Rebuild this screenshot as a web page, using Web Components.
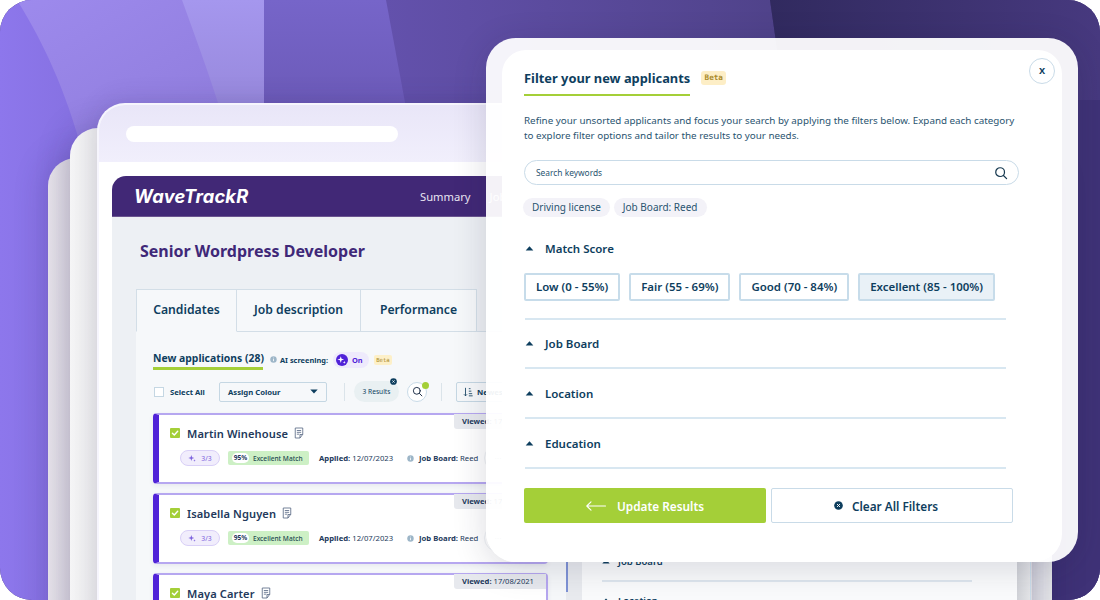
<!DOCTYPE html>
<html lang="en">
<head>
<meta charset="utf-8">
<title>WaveTrackR filters</title>
<style>
  html, body { margin: 0; background: #fff; }
  body { font-family: "Noto Sans", sans-serif; color: #0e3e5e; }
</style>
</head>
<body>
<hero-scene>
  <back-window slot="windows" class="w3"></back-window>
  <back-window slot="windows" class="w2"></back-window>
  <app-window slot="windows">
    <candidate-list slot="left">
      <candidate-card name="Martin Winehouse" viewed="17/08/2021"></candidate-card>
      <candidate-card name="Isabella Nguyen" viewed="17/08/2021"></candidate-card>
      <candidate-card name="Maya Carter" viewed="17/08/2021"></candidate-card>
    </candidate-list>
  </app-window>
  <filter-modal slot="modal">
    <filter-section first label="Match Score">
      <score-option>Low (0 - 55%)</score-option>
      <score-option>Fair (55 - 69%)</score-option>
      <score-option>Good (70 - 84%)</score-option>
      <score-option selected>Excellent (85 - 100%)</score-option>
    </filter-section>
    <filter-section tight label="Job Board"></filter-section>
    <filter-section label="Location"></filter-section>
    <filter-section label="Education"></filter-section>
  </filter-modal>
</hero-scene>

<script>
const ICONS = {
  search: `<svg viewBox="0 0 16 16" fill="none" stroke="currentColor" stroke-width="1.4" stroke-linecap="round"><circle cx="7" cy="7" r="5"/><path d="M10.8 10.8 14.4 14.4"/></svg>`,
  caret: `<svg viewBox="0 0 10 6"><path d="M5 .4 9.6 5.4H.4Z" fill="currentColor"/></svg>`,
  spark: `<svg viewBox="0 0 12 12" fill="currentColor"><path d="M5 1.5 6.1 4.9 9.5 6 6.1 7.1 5 10.5 3.9 7.1.5 6 3.9 4.9Z"/><path d="M9.7 7.8 10.2 9.3 11.7 9.8 10.2 10.3 9.7 11.8 9.2 10.3 7.7 9.8 9.2 9.3Z"/></svg>`,
  check: `<svg viewBox="0 0 10 10" fill="none" stroke="#fff" stroke-width="1.4" stroke-linecap="round" stroke-linejoin="round"><path d="M2.4 5.2 4.3 7 7.7 3.2"/></svg>`,
  note: `<svg viewBox="0 0 12 14" fill="none" stroke="currentColor" stroke-width="1"><path d="M1.5 1h9v7.6L7.2 13H1.5Z"/><path d="M3.4 4h5.2M3.4 6.2h5.2M3.4 8.4h3M7.2 13V8.8h3.3"/></svg>`,
  info: `<svg viewBox="0 0 10 10"><circle cx="5" cy="5" r="4.6" fill="#9db6c8"/><path d="M5 4.4v3M5 2.4v1" stroke="#fff" stroke-width="1.2"/></svg>`,
  sort: `<svg viewBox="0 0 12 12" fill="none" stroke="currentColor" stroke-width="1"><path d="M3 1v9.5M1.2 8.8 3 10.6 4.8 8.8M7 2h2M7 5h3M7 8h4M7 10.6h4.6"/></svg>`,
  arrow: `<svg viewBox="0 0 20 10" fill="none" stroke="currentColor" stroke-width="1.1" stroke-linecap="round" stroke-linejoin="round"><path d="M19.5 5H.8M5 .8.8 5 5 9.2"/></svg>`,
  clear: `<svg viewBox="0 0 10 10"><circle cx="5" cy="5" r="4.8" fill="currentColor"/><path d="M3.4 3.4 6.6 6.6M6.6 3.4 3.4 6.6" stroke="#fff" stroke-width="1.1"/></svg>`
};

class HeroScene extends HTMLElement {
  constructor() {
    super();
    this.attachShadow({ mode: "open" }).innerHTML = `
      <style>
        :host { display: block; position: relative; width: 1100px; height: 600px; overflow: hidden; border-radius: 32px; background: #3f3277; }
        svg { position: absolute; inset: 0; width: 100%; height: 100%; }
      </style>
      <svg viewBox="0 0 1100 600" preserveAspectRatio="none">
        <defs>
          <linearGradient id="base" x1="0" x2="1"><stop offset="0" stop-color="#8d77ec"/><stop offset="1" stop-color="#7563c8"/></linearGradient>
          <linearGradient id="b1" x1="0" x2="1" y1="0" y2="1"><stop offset="0" stop-color="#9d8aed"/><stop offset="1" stop-color="#8d7ad9"/></linearGradient>
          <linearGradient id="b2" x1="0" x2="0" y1="0" y2="1"><stop offset="0" stop-color="#a597ee"/><stop offset="1" stop-color="#9485d8"/></linearGradient>
          <linearGradient id="b3" x1="0" x2="0" y1="0" y2="1"><stop offset="0" stop-color="#7665c9"/><stop offset="1" stop-color="#6957b3"/></linearGradient>
          <linearGradient id="b4" x1="0" x2="1"><stop offset="0" stop-color="#6351ac"/><stop offset="1" stop-color="#4f4289"/></linearGradient>
          <linearGradient id="b5" x1="0" x2="1"><stop offset="0" stop-color="#312a5f"/><stop offset="1" stop-color="#47397f"/></linearGradient>
        </defs>
        <rect width="264" height="600" fill="url(#base)"/>
        <path d="M17 0C45 45 65 90 82 150H240L264 0Z" fill="url(#b1)"/>
        <path d="M182 0C200 50 215 90 226 130H264V0Z" fill="url(#b2)"/>
        <rect x="264" width="150" height="140" fill="url(#b3)"/>
        <path d="M386 0 412 140H790L770 0Z" fill="url(#b4)"/>
        <path d="M770 0 790 140 1052 600H1100V0Z" fill="url(#b5)"/>
        <rect x="790" y="100" width="310" height="500" fill="#3f3277"/>
      </svg>
      <slot name="windows"></slot>
      <slot name="modal"></slot>`;
  }
}

class BackWindow extends HTMLElement {
  constructor() {
    super();
    const front = this.classList.contains("w2");
    this.attachShadow({ mode: "open" }).innerHTML = `
      <style>
        :host {
          display: block; position: absolute; bottom: -40px;
          left: ${front ? 70 : 48}px; width: ${front ? 962 : 1004}px; top: ${front ? 128 : 158}px;
          border-radius: 28px 28px 0 0;
          background: ${front
            ? "linear-gradient(90deg,#f5f5f6,#e8e8ea 27px,#e8e8ea)"
            : "linear-gradient(90deg,#e8e5ec,#d7d3dd 22px,#e6e7ea 22px)"};
          box-shadow: 0 0 34px rgba(40,30,90,.22);
        }
      </style>`;
  }
}

class AppWindow extends HTMLElement {
  constructor() {
    super();
    this.attachShadow({ mode: "open" }).innerHTML = `
      <style>
        :host {
          display: flex; flex-direction: column; position: absolute; left: 97px; top: 103px; width: 934px; bottom: -40px;
          border-radius: 28px 28px 0 0; overflow: hidden; box-sizing: border-box;
          border: solid #f6f5fd; border-width: 2px 0 0 2px;
          background: #fff; box-shadow: 0 -4px 24px rgba(40,30,90,.12);
        }
        .chrome { height: 57px; flex: none; box-sizing: border-box; padding: 21px 0 0 27px; background: linear-gradient(#e9e6f8, #f1effc); }
        .chrome i { display: block; width: 272px; height: 16px; border-radius: 8px; background: #fff; }
        .body { flex: 1; min-height: 0; display: flex; padding: 14px 0 0 13px; background: linear-gradient(90deg,#fff calc(100% - 15px),#cfd1d6 calc(100% - 15px),#e3e4e7 calc(100% - 1px),#c9dbe8 calc(100% - 1px)); }
        .app { width: 905px; display: flex; flex-direction: column; }
        header { height: 41px; flex: none; box-sizing: border-box; display: flex; align-items: center; padding-left: 22px; background: #412876; border-bottom: 1px solid #6a548f; border-radius: 14px 0 0 0; color: #fff; }
        .logo { font: italic 700 18.3px/1 Inter, "Liberation Sans", sans-serif; letter-spacing: .2px; width: 286px; white-space: nowrap; }
        nav { display: flex; gap: 19px; font-size: 11.2px; color: #e9e5f2; }
        main { flex: 1; background: #edf0f4; min-height: 0; }
        h1 { margin: 0; padding: 23px 0 0 28px; font-size: 16px; line-height: 22px; font-weight: 700; color: #3f2878; }
        .tabs { display: flex; margin: 27px 0 0 24px; height: 43px; box-sizing: border-box; border-bottom: 1px solid #d3dee7; }
        .tabs span { box-sizing: border-box; height: 43px; padding-bottom: 2px; display: flex; align-items: center; justify-content: center; font-size: 12.2px; font-weight: 600; background: #f6f8fa; border: solid #d3dee7; border-width: 1px 1px 1px 0; }
        .tabs span:first-child { width: 101px; border-left-width: 1px; border-bottom-color: #f6f8fa; }
        .tabs span:nth-child(2) { width: 124px; }
        .tabs span:nth-child(3) { width: 116px; }
        .cols { display: flex; margin-left: 24px; height: 300px; }
        .left { width: 430px; flex: none; box-sizing: border-box; padding: 8px 18px 0 17px; background: #f6f8fa; position: relative; }
        .scroll { width: 16px; flex: none; background: #e9ebef; position: relative; }
        .scroll::before { content: ""; display: block; width: 2px; height: 260px; background: #7f93d6; }
        .right { flex: 1; background: #fafbfc; padding: 219px 45px 0 20px; }
        .right div { display: flex; align-items: center; gap: 8px; font-size: 9.5px; font-weight: 600; height: 20px; padding-bottom: 9px; margin-bottom: 8px; border-bottom: 2px solid #dde6ee; }
        .right div svg { width: 8px; height: 5px; }
      </style>
      <div class="chrome"><i></i></div>
      <div class="body">
        <div class="app">
          <header><span class="logo">WaveTrackR</span>
            <nav><span>Summary</span><span>Job</span></nav></header>
          <main>
            <h1>Senior Wordpress Developer</h1>
            <div class="tabs"><span>Candidates</span><span>Job description</span><span>Performance</span></div>
            <div class="cols">
              <div class="left"><slot name="left"></slot></div>
              <div class="scroll"></div>
              <div class="right">
                <div>${ICONS.caret}Job Board</div>
                <div>${ICONS.caret}Location</div>
              </div>
            </div>
          </main>
        </div>
      </div>`;
  }
}

class CandidateList extends HTMLElement {
  static #template = document.createElement("template");
  static {
    this.#template.innerHTML = `
      <style>
        :host { display: block; font-family: "Noto Sans", sans-serif; }
        .heading { display: flex; align-items: center; height: 39px; }
        .tab { height: 21px; width: 110px; box-sizing: border-box; line-height: 18px; margin-top: -1px; font-size: 10.4px; font-weight: 700; white-space: nowrap; border-bottom: 3px solid #a4cf38; }
        .info { width: 7px; height: 7px; margin-left: 7px; display: flex; }
        .ai { margin-left: 3px; font-size: 7.4px; font-weight: 700; white-space: nowrap; }
        .toggle { display: flex; align-items: center; gap: 4px; box-sizing: border-box; width: 36px; height: 16px; margin-left: 5px; padding-left: 3px; border-radius: 8px; background: #eeeafc; color: #5022d8; font-size: 7.4px; font-weight: 700; }
        .toggle b { width: 12px; height: 12px; border-radius: 50%; background: #5022d8; color: #fff; display: flex; align-items: center; justify-content: center; }
        .toggle svg { width: 9px; height: 9px; }
        .beta { margin-left: 5px; width: 18px; height: 10px; border-radius: 2px; background: #fdf0c8; color: #a98a2a; font: 5.6px/10px "DejaVu Sans Mono", monospace; text-align: center; }
        .tools { display: flex; align-items: center; height: 21px; margin: 2px 0 11px; font-size: 7.7px; font-weight: 700; }
        .box { width: 10px; height: 10px; box-sizing: border-box; margin-left: 1px; border: 1px solid #c5d7e3; background: #fff; }
        .all { margin-left: 6px; width: 49px; white-space: nowrap; }
        .select { width: 108px; height: 20px; box-sizing: border-box; display: flex; align-items: center; justify-content: space-between; padding: 0 8px; border: 1px solid #c5d7e3; border-radius: 2px; white-space: nowrap; }
        .select svg { width: 8px; height: 5px; transform: scaleY(-1); }
        .sep { width: 1px; height: 18px; background: #dbe4ea; }
        .results { position: relative; width: 45px; height: 21px; border-radius: 11px; background: #e9f0f2; display: flex; align-items: center; justify-content: center; font-size: 6.6px; font-weight: 400; white-space: nowrap; }
        .results svg { position: absolute; right: 2px; top: -3px; width: 7px; height: 7px; }
        .circle { position: relative; width: 20px; height: 20px; box-sizing: border-box; margin-left: 8px; border: 1px solid #c9dbe8; border-radius: 50%; background: #fff; display: flex; align-items: center; justify-content: center; color: #1b2c45; }
        .circle svg { width: 11px; height: 11px; }
        .circle i { position: absolute; right: -3px; top: -1px; width: 7px; height: 7px; border-radius: 50%; background: #a4cf38; }
        .newest { display: flex; align-items: center; gap: 4px; width: 70px; height: 20px; box-sizing: border-box; padding-left: 6px; border: 1px solid #c5d7e3; border-radius: 2px; white-space: nowrap; }
        .newest svg { width: 10px; height: 10px; }
        ::slotted(candidate-card) { margin-bottom: 9px; }
      </style>
      <div class="heading">
        <div class="tab">New applications (28)</div>
        <span class="info"></span><span class="ai">AI screening:</span>
        <span class="toggle"><b></b>On</span><span class="beta">Beta</span>
      </div>
      <div class="tools">
        <span class="box"></span><span class="all">Select All</span>
        <span class="select">Assign Colour<span class="c"></span></span>
        <span class="sep" style="margin:0 9px 0 17px"></span>
        <span class="results">3 Results<span class="x"></span></span>
        <span class="circle"><span class="s"></span><i></i></span>
        <span class="sep" style="margin:0 14px"></span>
        <span class="newest"><span class="n"></span>Newest</span>
      </div>
      <slot></slot>`;
  }
  constructor() {
    super();
    this.attachShadow({ mode: "open" }).appendChild(CandidateList.#template.content.cloneNode(true));
    const r = this.shadowRoot;
    r.querySelector(".info").innerHTML = ICONS.info;
    r.querySelector(".toggle b").innerHTML = ICONS.spark;
    r.querySelector(".c").outerHTML = ICONS.caret;
    r.querySelector(".x").outerHTML = ICONS.clear;
    r.querySelector(".s").outerHTML = ICONS.search;
    r.querySelector(".n").outerHTML = ICONS.sort;
  }
}

class CandidateCard extends HTMLElement {
  constructor() {
    super();
    const name = this.getAttribute("name");
    const viewed = this.getAttribute("viewed");
    this.attachShadow({ mode: "open" }).innerHTML = `
      <style>
        :host { display: block; position: relative; box-sizing: border-box; height: 71px; padding: 9px 0 0 11px; background: #fff; border: 2px solid #b6a7f0; border-left: 6px solid #5022d8; border-radius: 4px; box-shadow: 0 2px 5px rgba(60,60,100,.08); font-family: "Noto Sans", sans-serif; color: #23395b; }
        .top { display: flex; align-items: center; height: 18px; }
        .tick { width: 10px; height: 10px; background: #a4cf38; border-radius: 1px; display: flex; }
        .name { margin-left: 7px; font-size: 11.1px; font-weight: 600; white-space: nowrap; letter-spacing: .1px; }
        .note { width: 10px; height: 12px; margin-left: 6px; color: #5a6a85; display: flex; }
        .meta { display: flex; align-items: center; height: 16px; margin: 8px 0 0 10px; font-size: 7.7px; white-space: nowrap; }
        .ai { width: 40px; height: 16px; box-sizing: border-box; display: flex; align-items: center; justify-content: center; gap: 5px; border: 1px solid #d9d0f7; border-radius: 8px; background: #f1edfc; color: #7c62dd; font-size: 6.8px; }
        .ai svg { width: 8px; height: 8px; }
        .match { width: 81px; height: 14px; margin-left: 8px; box-sizing: border-box; padding-left: 4px; display: flex; align-items: center; gap: 4px; border-radius: 2px; background: #cdf0c5; font-size: 6.6px; font-weight: 500; color: #1d4a52; }
        .match b { width: 17px; height: 10px; border-radius: 5px; background: #fff; color: #23395b; text-align: center; line-height: 10px; font-weight: 700; }
        .applied { margin-left: 10px; width: 88px; }
        .info { width: 7px; height: 7px; display: flex; margin-right: 5px; }
        .more { position: absolute; right: 34px; top: 29px; width: 26px; height: 26px; border-radius: 50%; border: 1px solid #eef1f4; display: flex; align-items: center; justify-content: center; color: #8d9aa9; font-size: 9px; }
        .viewed { position: absolute; right: 0; top: -1px; width: 92px; height: 15px; box-sizing: border-box; padding-left: 8px; line-height: 15px; background: #e7e9ee; border-radius: 0 0 0 3px; font-size: 7.6px; white-space: nowrap; }
        b { font-weight: 700; }
      </style>
      <div class="viewed"><b>Viewed:</b> ${viewed}</div>
      <div class="top"><span class="tick">${ICONS.check}</span><span class="name">${name}</span><span class="note">${ICONS.note}</span></div>
      <div class="meta">
        <span class="ai">${ICONS.spark}3/3</span>
        <span class="match"><b>95%</b>Excellent Match</span>
        <span class="applied"><b>Applied:</b> 12/07/2023</span>
        <span class="info">${ICONS.info}</span><span><b>Job Board:</b> Reed</span>
      </div>
      <div class="more">···</div>`;
  }
}

class ScoreOption extends HTMLElement {
  constructor() {
    super();
    this.attachShadow({ mode: "open" }).innerHTML = `
      <style>
        :host { display: block; box-sizing: border-box; height: 28px; padding: 0 10px; line-height: 24px; border: 2px solid #c7dcea; border-radius: 2px; font-size: 11.45px; font-weight: 600; white-space: nowrap; background: #fff; }
        :host([selected]) { background: #e9f1f7; }
      </style><slot></slot>`;
  }
}

class FilterSection extends HTMLElement {
  constructor() {
    super();
    this.attachShadow({ mode: "open" }).innerHTML = `
      <style>
        :host { display: block; width: 481px; margin-left: 1px; padding: 14px 0 14px; border-bottom: 2px solid #d8e7f1; }
        :host([first]) { padding-bottom: 17px; padding-top: 21px; }
        :host([tight]) { padding-top: 13px; }
        .head { display: flex; align-items: center; height: 20px; font-size: 11.5px; font-weight: 600; gap: 11px; }
        .head svg { width: 9px; height: 5px; }
        .opts { display: none; gap: 9px; margin: 15px 0 0 -1px; }
        :host([first]) .opts { display: flex; }
      </style>
      <div class="head">${ICONS.caret}<span>${this.getAttribute("label")}</span></div>
      <div class="opts"><slot></slot></div>`;
  }
}

class FilterModal extends HTMLElement {
  constructor() {
    super();
    this.attachShadow({ mode: "open" }).innerHTML = `
      <style>
        :host { display: block; position: absolute; left: 486px; top: 38px; width: 592px; height: 524px; box-sizing: border-box; padding: 12px 16px 0; border-radius: 30px; background: rgba(255,255,255,.94); box-shadow: 0 6px 34px rgba(30,30,60,.16); font-family: "Noto Sans", sans-serif; color: #0e3e5e; }
        .panel { position: relative; height: 100%; box-sizing: border-box; padding: 18px 43px 0 22px; background: #fff; border-radius: 24px 24px 28px 24px; }
        .title { display: flex; align-items: flex-start; gap: 11px; }
        h2 { margin: 0; height: 28px; box-sizing: border-box; font-size: 12.85px; line-height: 20px; font-weight: 700; border-bottom: 2.5px solid #a4cf38; white-space: nowrap; }
        .beta { margin-top: 3px; width: 25px; height: 14px; border-radius: 3px; background: #fdeec6; color: #a98a2a; font: 700 7.6px/14px "DejaVu Sans Mono", monospace; text-align: center; }
        p { margin: 17px 0 0; font-size: 9.84px; line-height: 15px; color: #2a5470; white-space: nowrap; }
        .search { display: flex; align-items: center; justify-content: space-between; margin-top: 17px; height: 25px; box-sizing: border-box; padding: 0 10px 0 11px; border: 1px solid #c9dbe8; border-radius: 13px; font-size: 8.4px; color: #2a5470; }
        .search svg { width: 14px; height: 14px; color: #16384f; }
        .chips { display: flex; gap: 4px; margin: 13px 0 0 -1px; }
        .chips span { height: 19px; padding: 0 9px; line-height: 19px; border-radius: 10px; background: #f3f2f8; font-size: 10px; color: #2a5470; white-space: nowrap; }
        .actions { display: flex; gap: 5px; margin-top: 19px; }
        .actions div { width: 242px; height: 35px; box-sizing: border-box; display: flex; align-items: center; justify-content: center; border-radius: 2px; font-size: 11.8px; font-weight: 600; }
        .update { background: #a4cf38; color: #fff; gap: 11px; }
        .update svg { width: 20px; height: 10px; }
        .clear { background: #fff; border: 1px solid #c9dbe8; gap: 9px; padding-right: 12px; }
        .clear svg { width: 9px; height: 9px; }
        .close { position: absolute; right: 7px; top: 8px; width: 26px; height: 26px; box-sizing: border-box; border: 1px solid #c9dbe8; border-radius: 50%; background: #fff; text-align: center; font-size: 11px; line-height: 22px; font-weight: 600; }
      </style>
      <div class="panel">
        <div class="close">x</div>
        <div class="title"><h2>Filter your new applicants</h2><span class="beta">Beta</span></div>
        <p>Refine your unsorted applicants and focus your search by applying the filters below. Expand each category<br>to explore filter options and tailor the results to your needs.</p>
        <div class="search"><span>Search keywords</span>${ICONS.search}</div>
        <div class="chips"><span>Driving license</span><span>Job Board: Reed</span></div>
        <slot></slot>
        <div class="actions">
          <div class="update">${ICONS.arrow}<span>Update Results</span></div>
          <div class="clear">${ICONS.clear}<span>Clear All Filters</span></div>
        </div>
      </div>`;
  }
}

customElements.define("hero-scene", HeroScene);
customElements.define("back-window", BackWindow);
customElements.define("app-window", AppWindow);
customElements.define("candidate-list", CandidateList);
customElements.define("candidate-card", CandidateCard);
customElements.define("score-option", ScoreOption);
customElements.define("filter-section", FilterSection);
customElements.define("filter-modal", FilterModal);
</script>
</body>
</html>
